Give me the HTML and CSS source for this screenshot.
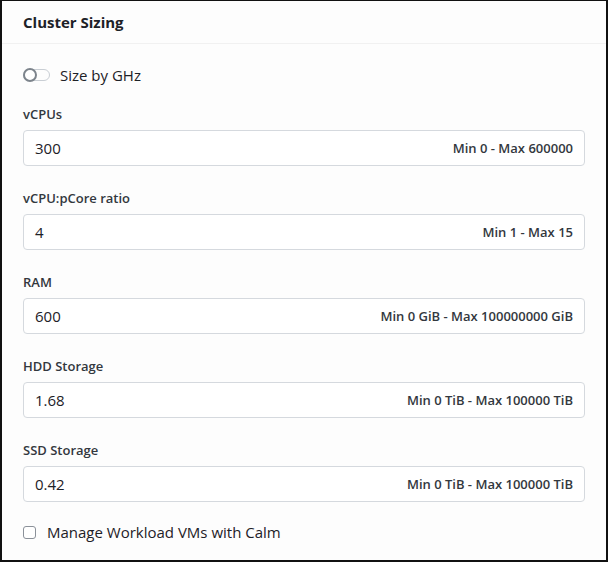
FILE: index.html
```html
<!DOCTYPE html>
<html lang="en">
  <head>
    <meta charset="UTF-8" />
    <meta name="viewport" content="width=device-width, initial-scale=1.0" />
    <title>Cluster Sizing</title>
    <link rel="stylesheet" href="styles.css">
  </head>
  <body>
    <div class="panel">
      <div class="panel-header">Cluster Sizing</div>
      <div class="panel-body">
        <label class="switch-row">
          <span class="switch"><span class="knob"></span></span>
          <span>Size by GHz</span>
        </label>

        <div class="field">
          <div class="field-label">vCPUs</div>
          <div class="field-input">
            <span class="value">300</span>
            <span class="hint">Min 0 - Max 600000</span>
          </div>
        </div>

        <div class="field">
          <div class="field-label">vCPU:pCore ratio</div>
          <div class="field-input">
            <span class="value">4</span>
            <span class="hint">Min 1 - Max 15</span>
          </div>
        </div>

        <div class="field">
          <div class="field-label">RAM</div>
          <div class="field-input">
            <span class="value">600</span>
            <span class="hint">Min 0 GiB - Max 100000000 GiB</span>
          </div>
        </div>

        <div class="field">
          <div class="field-label">HDD Storage</div>
          <div class="field-input">
            <span class="value">1.68</span>
            <span class="hint">Min 0 TiB - Max 100000 TiB</span>
          </div>
        </div>

        <div class="field last">
          <div class="field-label">SSD Storage</div>
          <div class="field-input">
            <span class="value">0.42</span>
            <span class="hint">Min 0 TiB - Max 100000 TiB</span>
          </div>
        </div>

        <label class="check-row">
          <span class="checkbox"></span>
          <span>Manage Workload VMs with Calm</span>
        </label>
      </div>
    </div>
  </body>
</html>
```

FILE: styles.css
```css
body {
  margin: 0;
  font-family: 'Open Sans', 'Lato', sans-serif;
  color: #1d2127;
  background: #ffffff;
}
.panel {
  width: 608px;
  height: 562px;
  box-sizing: border-box;
  border: 2px solid #111111;
  border-top-width: 1px;
  background: #fdfdfd;
  overflow: hidden;
}
.panel-header {
  height: 42px;
  line-height: 42px;
  padding: 0 21px;
  font-size: 15px;
  font-weight: 700;
  border-bottom: 1px solid #f1f1f1;
}
.panel-body {
  padding: 20px 21px 0;
}
.switch-row, .check-row {
  display: flex;
  align-items: center;
  height: 22px;
  font-size: 15px;
}
.switch {
  position: relative;
  width: 25px;
  height: 10px;
  border: 1px solid #c9ced4;
  border-radius: 6px;
  margin-right: 10px;
  margin-left: 0;
}
.knob {
  position: absolute;
  left: -1px;
  top: -2px;
  width: 10px;
  height: 10px;
  border: 2px solid #7d848c;
  border-radius: 50%;
  background: #ffffff;
}
.field {
  margin-top: 19px;
}
.field + .field {
  margin-top: 23px;
}
.field-label {
  height: 18px;
  line-height: 18px;
  font-size: 13px;
  font-weight: 600;
  color: #33383e;
  margin-bottom: 7px;
}
.field-input {
  display: flex;
  align-items: center;
  justify-content: space-between;
  height: 36px;
  box-sizing: border-box;
  border: 1px solid #d5d9de;
  border-radius: 4px;
  background: #ffffff;
  padding: 0 11px 0 11px;
}
.value {
  font-size: 15px;
}
.hint {
  font-size: 13px;
  font-weight: 600;
  color: #33383e;
}
.check-row {
  margin-top: 19px;
}
.checkbox {
  width: 11px;
  height: 11px;
  border: 1.5px solid #8b9199;
  border-radius: 3px;
  margin-right: 11px;
  background: #ffffff;
}
```
